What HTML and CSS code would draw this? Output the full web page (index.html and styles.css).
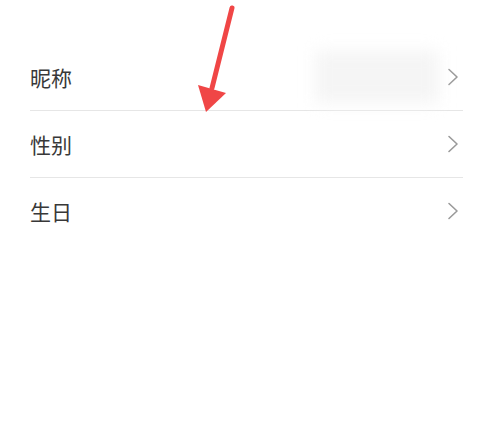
FILE: index.html
```html
<!DOCTYPE html>
<html lang="zh">
<head>
<meta charset="utf-8">
<link rel="stylesheet" href="styles.css">
</head>
<body>
<div class="page">
  <ul class="list">
    <li class="row">
      <span class="label">昵称</span>
      <span class="value-blur"></span>
      <svg class="chev" viewBox="0 0 12 18" width="12" height="18"><path d="M2 1.5 L10 9 L2 16.5" fill="none" stroke="#9a9a9a" stroke-width="1.6" stroke-linecap="round" stroke-linejoin="round"/></svg>
    </li>
    <li class="row">
      <span class="label">性别</span>
      <svg class="chev" viewBox="0 0 12 18" width="12" height="18"><path d="M2 1.5 L10 9 L2 16.5" fill="none" stroke="#9a9a9a" stroke-width="1.6" stroke-linecap="round" stroke-linejoin="round"/></svg>
    </li>
    <li class="row">
      <span class="label">生日</span>
      <svg class="chev" viewBox="0 0 12 18" width="12" height="18"><path d="M2 1.5 L10 9 L2 16.5" fill="none" stroke="#9a9a9a" stroke-width="1.6" stroke-linecap="round" stroke-linejoin="round"/></svg>
    </li>
  </ul>
  <svg class="pointer" viewBox="0 0 477 440" width="477" height="440">
    <line x1="232" y1="8" x2="212" y2="88" stroke="#f04646" stroke-width="5" stroke-linecap="round"/>
    <polygon points="198,85 226,93 206,112" fill="#f04646"/>
  </svg>
</div>
</body>
</html>
```
FILE: styles.css
```css
html, body {
  margin: 0;
  padding: 0;
  background: #ffffff;
}
.page {
  position: relative;
  width: 477px;
  height: 440px;
  overflow: hidden;
  font-family: "Noto Sans CJK SC", "Noto Sans", sans-serif;
}
.list {
  list-style: none;
  margin: 0;
  padding: 44px 14px 0 30px;
}
.row {
  display: flex;
  align-items: center;
  height: 66px;
  border-bottom: 1px solid #e6e6e6;
  padding-right: 4px;
}
.row:last-child {
  border-bottom: none;
}
.label {
  font-size: 21px;
  color: #383838;
  line-height: 1;
}
.value-blur {
  margin-left: auto;
  margin-right: 8px;
  width: 124px;
  height: 52px;
  background: #f5f5f5;
  filter: blur(8px);
}
.chev {
  margin-left: auto;
  display: block;
}
.value-blur + .chev {
  margin-left: 0;
}
.pointer {
  position: absolute;
  left: 0;
  top: 0;
  pointer-events: none;
}
```
